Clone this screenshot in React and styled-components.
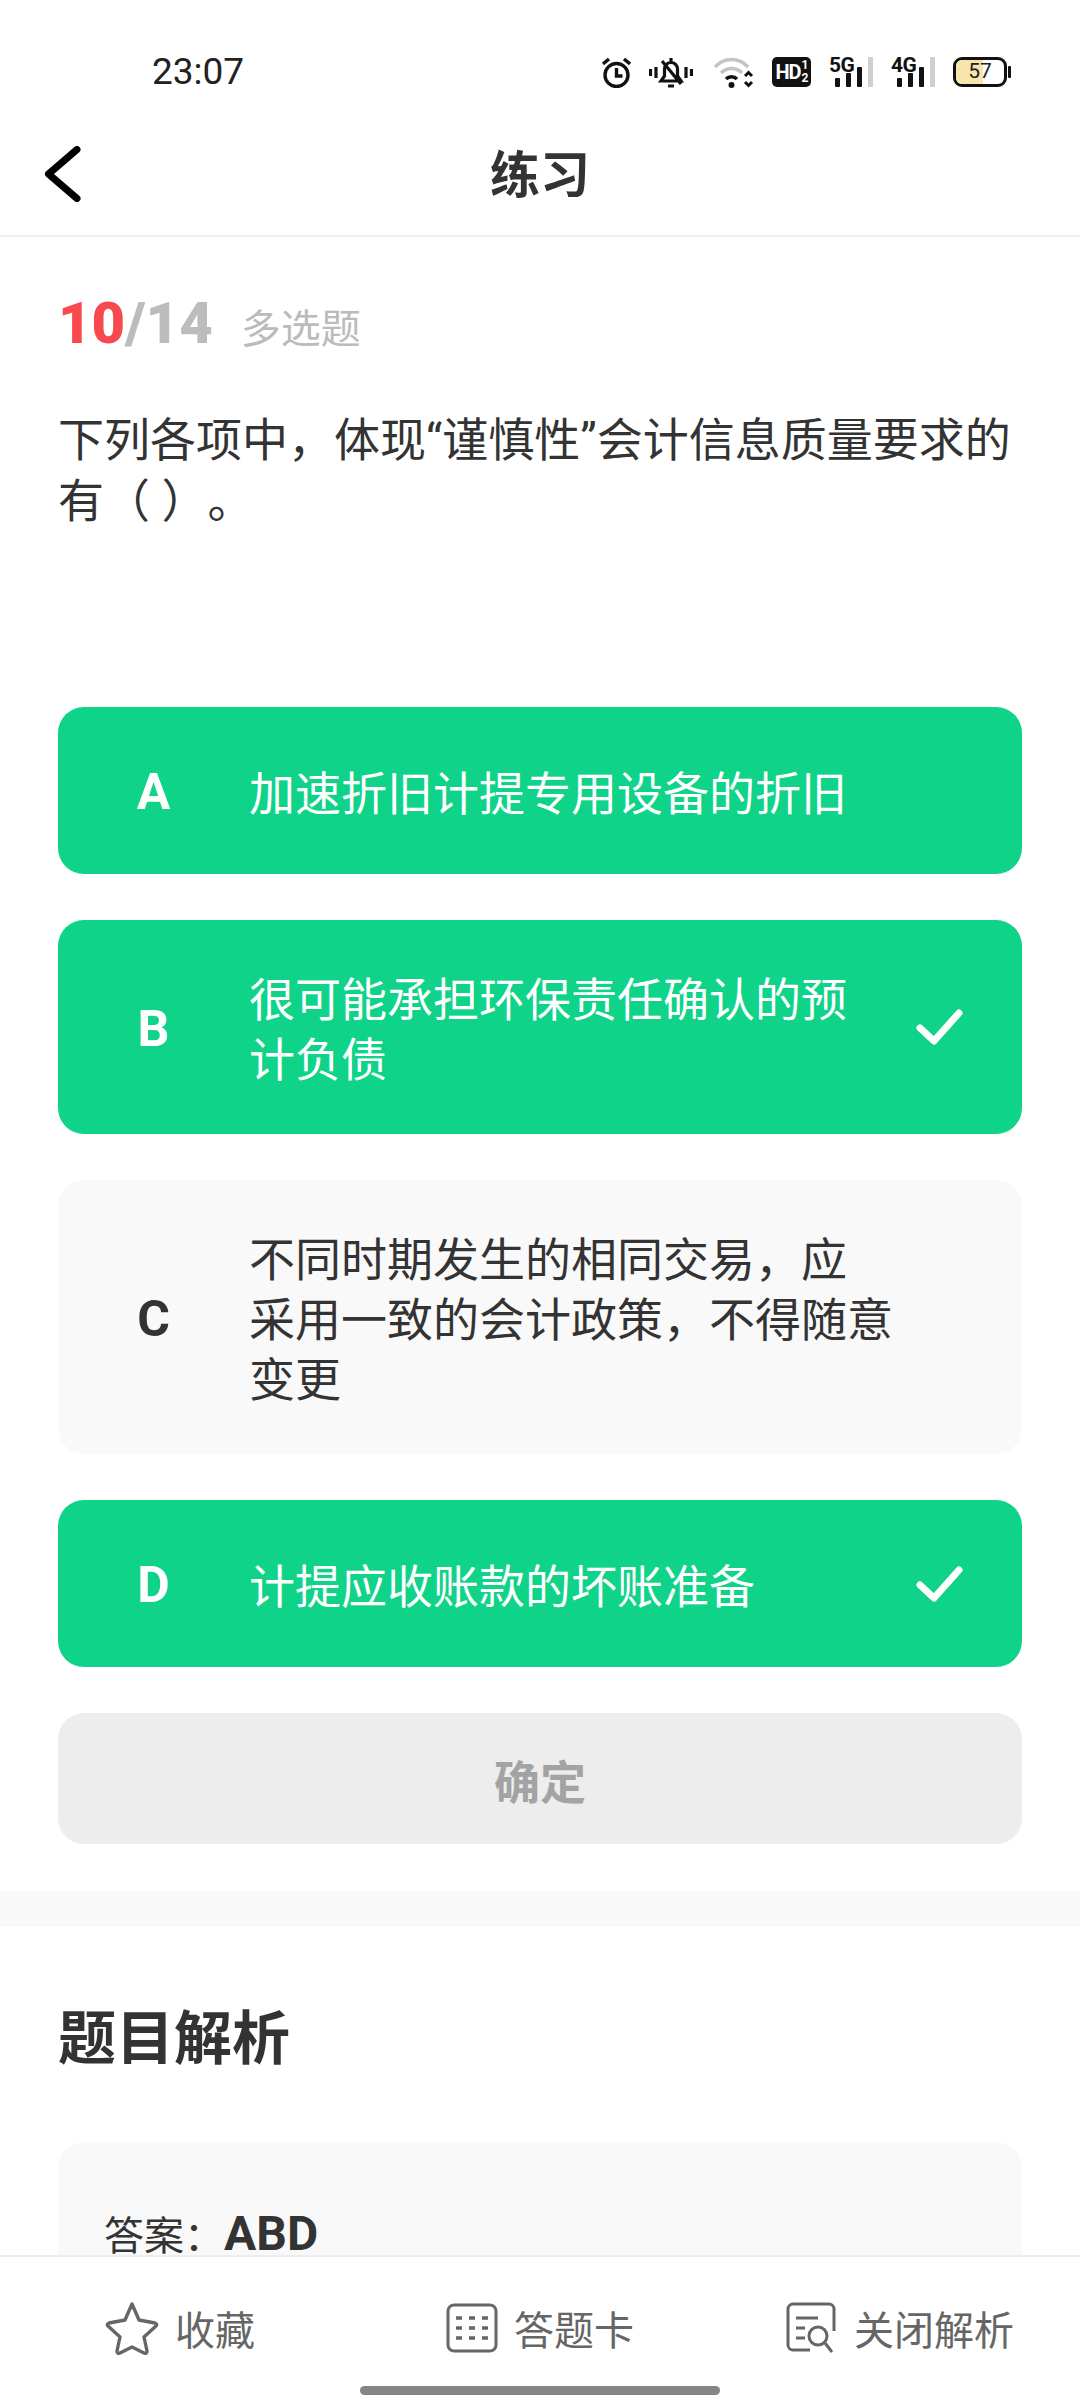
import React from "react";
import styled, { createGlobalStyle } from "styled-components";

const FONT = `Roboto, "Noto Sans CJK SC", sans-serif`;

const options = [
  { key: "A", lines: ["加速折旧计提专用设备的折旧"], on: true, check: false },
  { key: "B", lines: ["很可能承担环保责任确认的预", "计负债"], on: true, check: true },
  { key: "C", lines: ["不同时期发生的相同交易，应", "采用一致的会计政策，不得随意", "变更"], on: false, check: false },
  { key: "D", lines: ["计提应收账款的坏账准备"], on: true, check: true },
];

function StatusIcons() {
  return (
    <Icons>
      <svg width="29" height="31" viewBox="0 0 29 31" fill="none" stroke="#111" strokeWidth="3.4">
        <circle cx="14.5" cy="18" r="11.5" />
        <path d="M14.5 11v8h6M1 7l6-5M28 7l-6-5" />
      </svg>
      <svg width="44" height="31" viewBox="0 0 44 31" fill="none" stroke="#111" strokeWidth="3.2">
        <path d="M1.5 12v7M7 10v11M37 10v11M42.500 12v7" />
        <path d="M12 24h20l-3.500-5v-7a6.500 6.500 0 0 0-13 0v7zM19 29h6M22 1v4M13 4l19 23" />
      </svg>
      <svg width="43" height="31" viewBox="0 0 43 31" fill="none">
        <path d="M4 10C13 0 28 0 37 10M10 16c6-6 15-6 21 0" stroke="#c4c4c4" strokeWidth="3.500" />
        <path d="M15 22c3-3 8-3 11 0" stroke="#111" strokeWidth="3.500" />
        <circle cx="20.500" cy="28" r="3" fill="#111" />
        <path d="M34 19l3.500-3.500 3.500 3.500M34 25l3.500 3.500 3.500-3.500" stroke="#111" strokeWidth="3" />
      </svg>
      <HdBadge>
        HD<HdSub>1<br />2</HdSub>
      </HdBadge>
      <Signal label="5G" />
      <Signal label="4G" />
      <Battery>
        <BatteryFill style={{ width: "57%" }} />
        <BatteryText>57</BatteryText>
      </Battery>
      <BatteryTip />
    </Icons>
  );
}

function Signal({ label }) {
  return (
    <SignalBox>
      <SignalLabel>{label}</SignalLabel>
      <SignalBars>
        <SignalBar $h={9} />
        <SignalBar $h={14} />
        <SignalBar $h={20} />
        <SignalBar $h={30} $off />
      </SignalBars>
    </SignalBox>
  );
}

export default function App() {
  return (
    <Page>
      <Global />
      <StatusBar>
        <Time>23:07</Time>
        <StatusIcons />
      </StatusBar>
      <Header>
        <BackBtn>
          <svg width="40" height="56" viewBox="0 0 40 56" fill="none" stroke="#000" strokeWidth="7" strokeLinecap="round" strokeLinejoin="round">
            <path d="M33 3.500L4.500 28 33 52.500" />
          </svg>
        </BackBtn>
        <Title>练习</Title>
      </Header>
      <Main>
        <Progress>
          <Current>10</Current>
          <Total>/14</Total>
          <QType>多选题</QType>
        </Progress>
        <Question>下列各项中，体现“谨慎性”会计信息质量要求的有（ ）。</Question>
        <OptionList>
          {options.map((o) => (
            <Option key={o.key} $on={o.on}>
              <Letter>{o.key}</Letter>
              <OptionText>
                {o.lines.map((line) => (
                  <OptionLine key={line}>{line}</OptionLine>
                ))}
              </OptionText>
              {o.check && (
                <Check>
                  <svg width="48" height="38" viewBox="0 0 48 38" fill="none" stroke="#fff" strokeWidth="7" strokeLinecap="round" strokeLinejoin="round">
                    <path d="M4 20l14 13L43 5" />
                  </svg>
                </Check>
              )}
            </Option>
          ))}
          <Confirm>确定</Confirm>
        </OptionList>
      </Main>
      <Band />
      <Analysis>
        <AnalysisTitle>题目解析</AnalysisTitle>
        <AnswerCard>
          答案：<AnswerValue>ABD</AnswerValue>
        </AnswerCard>
      </Analysis>
      <BottomBar>
        <BarItem>
          <svg width="54" height="54" viewBox="0 0 54 54" fill="none" stroke="#666" strokeWidth="3.400" strokeLinejoin="round">
            <path d="M27 3l7 16 16 3c2 1 2 2 1 3L39 36l3 14c0 2-1 3-3 2l-12-6-12 6c-2 1-3 0-3-2l3-14L3 25c-1-1-1-2 1-3l16-3z" />
          </svg>
          <BarLabel>收藏</BarLabel>
        </BarItem>
        <BarItem>
          <svg width="52" height="50" viewBox="0 0 52 50" fill="none" stroke="#666" strokeWidth="3">
            <rect x="2" y="2" width="48" height="46" rx="6" />
            <path d="M10 15h32M10 25h32M10 35h32" strokeWidth="3.400" strokeDasharray="6 7" />
          </svg>
          <BarLabel>答题卡</BarLabel>
        </BarItem>
        <BarItem>
          <svg width="52" height="52" viewBox="0 0 52 52" fill="none" stroke="#666" strokeWidth="3">
            <path d="M24 48H7a5 5 0 0 1-5-5V7a5 5 0 0 1 5-5h36a5 5 0 0 1 5 5v22" />
            <path d="M10 16h22M10 26h9M10 36h9" />
            <circle cx="32" cy="34" r="9" />
            <path d="M39 41l7 9" />
          </svg>
          <BarLabel>关闭解析</BarLabel>
        </BarItem>
        <HomeIndicator />
      </BottomBar>
    </Page>
  );
}

const Global = createGlobalStyle`
  html, body {
    margin: 0;
    padding: 0;
    background: #fff;
    overflow: hidden;
  }
`;

const Page = styled.div`
  position: relative;
  width: 1080px;
  height: 2400px;
  overflow: hidden;
  background: #fff;
  font-family: ${FONT};
  color: #333;
  text-spacing-trim: space-all;
`;

const StatusBar = styled.div`
  height: 124px;
  box-sizing: border-box;
  padding: 50px 69px 0 152px;
  display: flex;
  justify-content: space-between;
  align-items: flex-start;
`;

const Time = styled.span`
  font-size: 37px;
  line-height: 44px;
  color: #222;
`;

const Icons = styled.div`
  display: flex;
  align-items: center;
  gap: 18px;
  height: 44px;
`;

const HdBadge = styled.div`
  display: flex;
  align-items: center;
  justify-content: center;
  width: 39px;
  height: 30px;
  background: #111;
  border-radius: 5px;
  color: #fff;
  font: 700 20px/1 Roboto, sans-serif;
  letter-spacing: -1px;
`;

const HdSub = styled.span`
  font-size: 12px;
  line-height: 13px;
  margin-left: 1px;
`;

const SignalBox = styled.div`
  position: relative;
  width: 44px;
  height: 30px;
`;

const SignalLabel = styled.span`
  position: absolute;
  left: 0;
  top: -2px;
  font: 700 21px/20px Roboto, sans-serif;
  letter-spacing: -0.5px;
  color: #111;
`;

const SignalBars = styled.div`
  position: absolute;
  right: 0;
  bottom: 0;
  display: flex;
  align-items: flex-end;
  gap: 6px;
`;

const SignalBar = styled.i`
  display: block;
  width: 5px;
  height: ${(p) => p.$h}px;
  border-radius: 1px;
  background: ${(p) => (p.$off ? "#cfcfcf" : "#111")};
`;

const Battery = styled.div`
  position: relative;
  width: 54px;
  height: 30px;
  box-sizing: border-box;
  border: 3.500px solid #111;
  border-radius: 9px;
  overflow: hidden;
`;

const BatteryFill = styled.div`
  height: 100%;
  background: #f8e4ad;
`;

const BatteryText = styled.span`
  position: absolute;
  inset: 0;
  text-align: center;
  font: 400 21px/23px Roboto, sans-serif;
  color: #222;
`;

const BatteryTip = styled.i`
  display: block;
  width: 3px;
  height: 12px;
  margin-left: -17px;
  background: #111;
  border-radius: 1px;
`;

const Header = styled.header`
  position: relative;
  height: 111px;
  display: flex;
  align-items: center;
  justify-content: center;
  border-bottom: 2px solid #eee;
`;

const BackBtn = styled.div`
  position: absolute;
  left: 44px;
  top: 22px;
  width: 40px;
  height: 56px;
`;

const Title = styled.h1`
  margin: -8px 0 0;
  font-size: 50px;
  font-weight: 700;
  line-height: 70px;
  color: #333;
`;

const Main = styled.main`
  padding: 0 58px;
`;

const Progress = styled.div`
  display: flex;
  align-items: baseline;
  margin-top: 50px;
  height: 72px;
`;

const Current = styled.span`
  font: 900 58px/72px Roboto, sans-serif;
  color: #f84a4e;
`;

const Total = styled.span`
  font: 900 58px/72px Roboto, sans-serif;
  color: #bcbcbc;
`;

const QType = styled.span`
  margin-left: 28px;
  font-size: 40px;
  color: #bbb;
`;

const Question = styled.p`
  margin: 51px 0 0;
  height: 297px;
  font-size: 46px;
  line-height: 61px;
  color: #333;
`;

const OptionList = styled.div`
  display: flex;
  flex-direction: column;
  gap: 46px;
`;

const Option = styled.div`
  display: flex;
  align-items: center;
  min-height: 167px;
  box-sizing: border-box;
  padding: 44px 58px 44px 0;
  border-radius: 26px;
  background: ${(p) => (p.$on ? "#0fd388" : "#f9f9f9")};
  color: ${(p) => (p.$on ? "#fff" : "#333")};
`;

const Letter = styled.span`
  width: 191px;
  margin-top: 3px;
  box-sizing: border-box;
  text-align: center;
  font: 700 50px/60px Roboto, sans-serif;
`;

const OptionText = styled.span`
  margin-top: 6px;
  font-size: 46px;
  line-height: 60px;
`;

const OptionLine = styled.span`
  display: block;
  white-space: nowrap;
`;

const Check = styled.span`
  display: flex;
  margin-left: auto;
`;

const Confirm = styled.div`
  height: 131px;
  display: flex;
  align-items: center;
  justify-content: center;
  border-radius: 26px;
  background: #ededed;
  color: #a3a3a3;
  font-size: 46px;
  font-weight: 700;
`;

const Band = styled.div`
  height: 36px;
  margin-top: 47px;
  background: #f9f9f9;
`;

const Analysis = styled.section`
  padding: 0 58px;
`;

const AnalysisTitle = styled.h2`
  margin: 70px 0 0;
  font-size: 58px;
  font-weight: 700;
  line-height: 84px;
  color: #333;
`;

const AnswerCard = styled.div`
  margin-top: 61px;
  padding: 62px 46px;
  height: 300px;
  border-radius: 26px;
  background: #f9f9f9;
  font-size: 40px;
  line-height: 60px;
`;

const AnswerValue = styled.span`
  font-size: 48px;
  font-weight: 700;
`;

const BottomBar = styled.nav`
  position: absolute;
  left: 0;
  right: 0;
  bottom: 0;
  height: 145px;
  box-sizing: border-box;
  padding-top: 44px;
  display: grid;
  grid-template-columns: repeat(3, 1fr);
  align-items: start;
  background: #fff;
  border-top: 2px solid #eee;
`;

const BarItem = styled.div`
  display: flex;
  align-items: center;
  justify-content: center;
  gap: 16px;
  height: 54px;
`;

const BarLabel = styled.span`
  font-size: 40px;
  color: #666;
`;

const HomeIndicator = styled.div`
  position: absolute;
  left: 360px;
  bottom: 5px;
  width: 360px;
  height: 9px;
  border-radius: 5px;
  background: #858585;
`;
